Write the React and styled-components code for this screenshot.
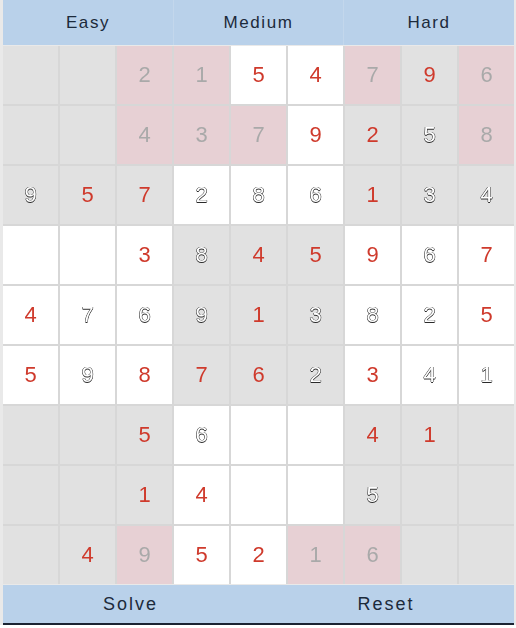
import React from "react";
import styled, { createGlobalStyle } from "styled-components";

const Global = createGlobalStyle`
  html, body { margin: 0; padding: 0; background: #ffffff; }
  body { font-family: "Liberation Sans", Arial, sans-serif; }
`;

const Frame = styled.div`
  width: 516px;
  box-sizing: border-box;
  padding: 0 2px 0 3px;
  background: #e9e9e9;
  display: flex;
  flex-direction: column;
  gap: 1px;
`;

const TabBar = styled.div`
  display: grid;
  grid-template-columns: 170px 170px 1fr;
  height: 45px;
  background: #b9d1ea;
`;

const Tab = styled.button`
  border: none;
  background: #b9d1ea;
  border-left: ${(p) => (p.$first ? "none" : "1px solid #c3d7ec")};
  font-family: "Liberation Sans", Arial, sans-serif;
  font-size: 17px;
  letter-spacing: 1.6px;
  color: #1c2a3b;
  padding: 0;
  cursor: pointer;
`;

const Board = styled.div`
  display: grid;
  grid-template-columns: repeat(9, 55px);
  grid-auto-rows: 58px;
  gap: 2px;
  background: #d7d7d7;
`;

const bgMap = { grey: "#e1e1e1", white: "#ffffff", pink: "#e7d0d4" };

const Cell = styled.div`
  background: ${(p) => bgMap[p.$bg]};
  display: flex;
  align-items: center;
  justify-content: center;
  font-family: "Liberation Sans", Arial, sans-serif;
  font-size: 22px;
  will-change: transform;
  ${(p) =>
    p.$kind === "r"
      ? "color: #cf3a2c;"
      : p.$kind === "g"
      ? "color: #a9a9a9;"
      : "color: #ffffff; text-shadow: 0.5px 0 0 #2a2a2a, -0.5px 0 0 #2a2a2a, 0 0.5px 0 #2a2a2a, 0 -0.5px 0 #2a2a2a;"}
`;

const ActionBar = styled.div`
  display: grid;
  grid-template-columns: 255px 1fr;
  height: 38px;
  background: #b9d1ea;
  border-bottom: 2px solid #1a2332;
`;

const Action = styled.button`
  border: none;
  background: #b9d1ea;
  font-family: "Liberation Sans", Arial, sans-serif;
  font-size: 18px;
  letter-spacing: 2px;
  color: #1c2a3b;
  padding: 0;
  cursor: pointer;
`;

// bg: G grey, W white, P pink ; digit + kind: r red, g grey, o outline
const rows = [
  "G. G. P2g P1g W5r W4r P7g G9r P6g",
  "G. G. P4g P3g P7g W9r G2r G5o P8g",
  "G9o G5r G7r W2o W8o W6o G1r G3o G4o",
  "W. W. W3r G8o G4r G5r W9r W6o W7r",
  "W4r W7o W6o G9o G1r G3o W8o W2o W5r",
  "W5r W9o W8r G7r G6r G2o W3r W4o W1o",
  "G. G. G5r W6o W. W. G4r G1r G.",
  "G. G. G1r W4r W. W. G5o G. G.",
  "G. G4r P9g W5r W2r P1g P6g G. G.",
];

const bgName = { G: "grey", W: "white", P: "pink" };

export default function App() {
  return (
    <>
      <Global />
      <Frame>
        <TabBar>
          <Tab $first>Easy</Tab>
          <Tab>Medium</Tab>
          <Tab>Hard</Tab>
        </TabBar>
        <Board>
          {rows.map((row, r) =>
            row.split(" ").map((c, i) => (
              <Cell key={`${r}-${i}`} $bg={bgName[c[0]]} $kind={c[2]}>
                {c[1] === "." ? "" : c[1]}
              </Cell>
            ))
          )}
        </Board>
        <ActionBar>
          <Action>Solve</Action>
          <Action>Reset</Action>
        </ActionBar>
      </Frame>
    </>
  );
}
